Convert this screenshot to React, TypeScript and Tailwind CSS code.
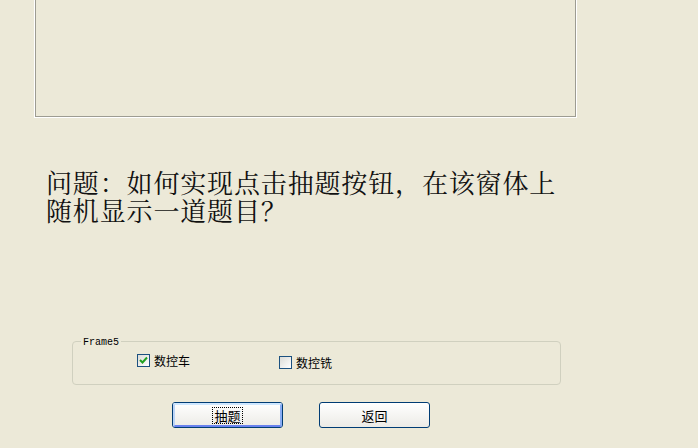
import React from "react";

const serif = { fontFamily: '"Noto Serif CJK SC", "Noto Sans CJK SC", serif' };
const ui = { fontFamily: '"Noto Sans CJK SC", "Liberation Sans", sans-serif' };

function CheckBox({ checked, label, className }: { checked?: boolean; label: string; className?: string }) {
  return (
    <label className={`flex items-center gap-[4px] text-[12px] leading-none text-black ${className ?? ""}`} style={ui}>
      <span className="w-[13px] h-[13px] border border-[#1c5180] bg-gradient-to-br from-[#dcdcd7] to-white flex items-center justify-center">
        {checked && (
          <svg width="9" height="9" viewBox="0 0 9 9">
            <path d="M1 4 L3.5 6.5 L8 1.5" fill="none" stroke="#21a121" strokeWidth="2" />
          </svg>
        )}
      </span>
      <span>{label}</span>
    </label>
  );
}

function Button({ label, focused }: { label: string; focused?: boolean }) {
  return (
    <button
      className="w-[111px] h-[26px] rounded-[3px] border border-[#003c74] bg-gradient-to-b from-white to-[#ecebe6] flex items-center justify-center p-0"
      style={ui}
    >
      <span
        className={`w-full h-full rounded-[2px] flex items-center justify-center ${
          focused ? "border-2 border-t-[#cee7ff] border-l-[#bcd4f6] border-r-[#89adf4] border-b-[#6982ee]" : ""
        }`}
      >
        <span className={`text-[13px] leading-none text-black px-[1px] py-[1px] ${focused ? "outline outline-1 outline-dotted outline-black" : ""}`}>
          {label}
        </span>
      </span>
    </button>
  );
}

export default function App() {
  return (
    <div className="w-[698px] h-[448px] bg-[#ece9d8] overflow-hidden flex flex-col">
      {/* sunken panel at top */}
      <div className="ml-[34px] w-[543px] h-[118px] border-l border-r border-b border-white shrink-0">
        <div className="w-full h-full border-l border-r border-b border-[#9d9c92]" />
      </div>

      <div className="ml-[46px] mt-[50px] text-[26px] leading-[28px] tracking-[0.85px] text-[#111] whitespace-nowrap" style={serif}>
        <div>问题：如何实现点击抽题按钮，在该窗体上</div>
        <div>随机显示一道题目？</div>
      </div>

      {/* group box */}
      <div className="relative ml-[72px] mt-[117px] w-[489px] h-[44px] border border-[#d0d0bf] rounded-[4px]">
        <span
          className="absolute left-[8px] top-[-5px] px-[2px] bg-[#ece9d8] text-[10px] leading-[11px] text-black"
          style={{ fontFamily: '"Liberation Mono", monospace' }}
        >
          Frame5
        </span>
        <div className="flex items-start pt-[12px]">
          <CheckBox checked label="数控车" className="ml-[64px]" />
          <CheckBox label="数控铣" className="ml-[89px] mt-[2px]" />
        </div>
      </div>

      <div className="flex ml-[172px] mt-[17px] gap-[36px]">
        <Button label="抽题" focused />
        <Button label="返回" />
      </div>
    </div>
  );
}
